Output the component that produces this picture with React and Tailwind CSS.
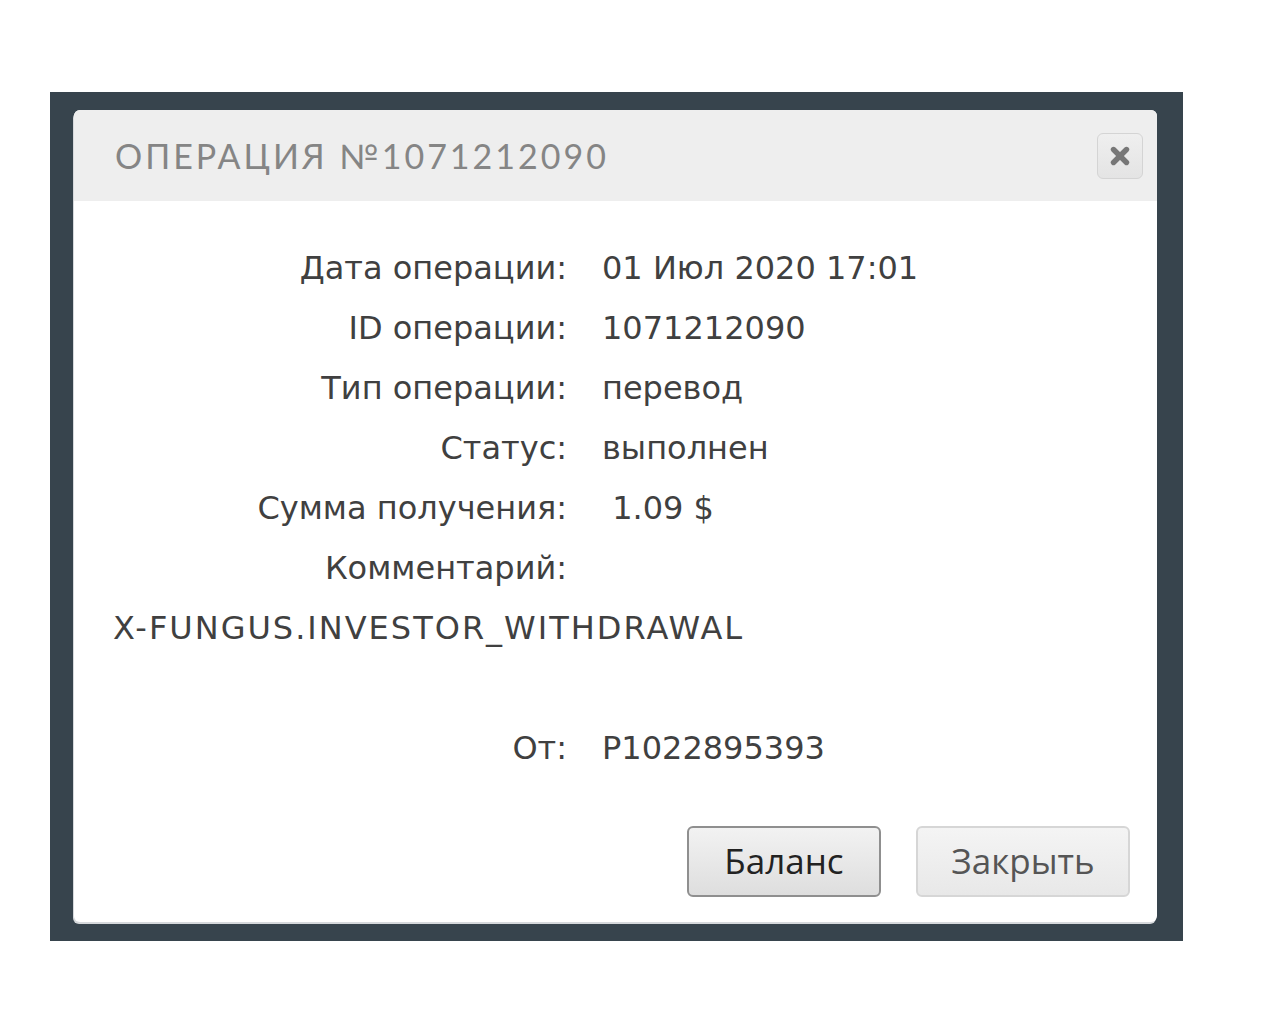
import { X } from "lucide-react";

const rows = [
  { label: "Дата операции:", value: "01 Июл 2020 17:01" },
  { label: "ID операции:", value: "1071212090" },
  { label: "Тип операции:", value: "перевод" },
  { label: "Статус:", value: "выполнен" },
  { label: "Сумма получения:", value: "\u00a01.09 $" },
  { label: "Комментарий:", value: "" },
];

export default function App() {
  return (
    <div className="min-h-[1024px] bg-white pt-[92px] pl-[50px]">
      {/* backdrop */}
      <div className="w-[1133px] h-[849px] bg-[#37444d] pt-[18px] pl-[24px]">
        {/* modal */}
        <div className="w-[1083px] h-[812px] bg-white rounded-md flex flex-col shadow-[-1px_2px_0_#d6d9dc]">
          <div className="h-[91px] bg-[#eeeeee] rounded-t-md flex items-center justify-between pl-[41px] pr-[14px]">
            <h2 className="text-[34px] tracking-[3px] text-[#858585] font-['Lato',sans-serif]">
              ОПЕРАЦИЯ №1071212090
            </h2>
            <button className="w-[46px] h-[46px] rounded-md border border-[#d4d4d4] bg-gradient-to-b from-[#efefef] to-[#e4e4e4] flex items-center justify-center">
              <X className="w-[26px] h-[26px] text-[#777]" strokeWidth={5} />
            </button>
          </div>

          <div className="pt-[37px] text-[#404040] text-[32px] font-['DejaVu_Sans',sans-serif]">
            {rows.map((r) => (
              <div key={r.label} className="h-[60px] flex items-center">
                <div className="w-[493px] text-right">{r.label}</div>
                <div className="pl-[35px] whitespace-pre">{r.value}</div>
              </div>
            ))}
            <div className="h-[60px] flex items-center pl-[39px] tracking-[2px]">
              X-FUNGUS.INVESTOR_WITHDRAWAL
            </div>
            <div className="h-[60px]" />
            <div className="h-[60px] flex items-center">
              <div className="w-[493px] text-right">От:</div>
              <div className="pl-[35px]">P1022895393</div>
            </div>
          </div>

          <div className="mt-[48px] flex justify-end gap-[35px] pr-[27px] font-['Open_Sans',sans-serif] text-[35px]">
            <button className="w-[194px] h-[71px] rounded-md border-2 border-[#8f8f8f] bg-gradient-to-b from-[#f2f2f2] to-[#dedede] text-[#222]">
              Баланс
            </button>
            <button className="w-[214px] h-[71px] rounded-md border-2 border-[#d6d6d6] bg-gradient-to-b from-[#f4f4f4] to-[#e8e8e8] text-[#555]">
              Закрыть
            </button>
          </div>
        </div>
      </div>
    </div>
  );
}
